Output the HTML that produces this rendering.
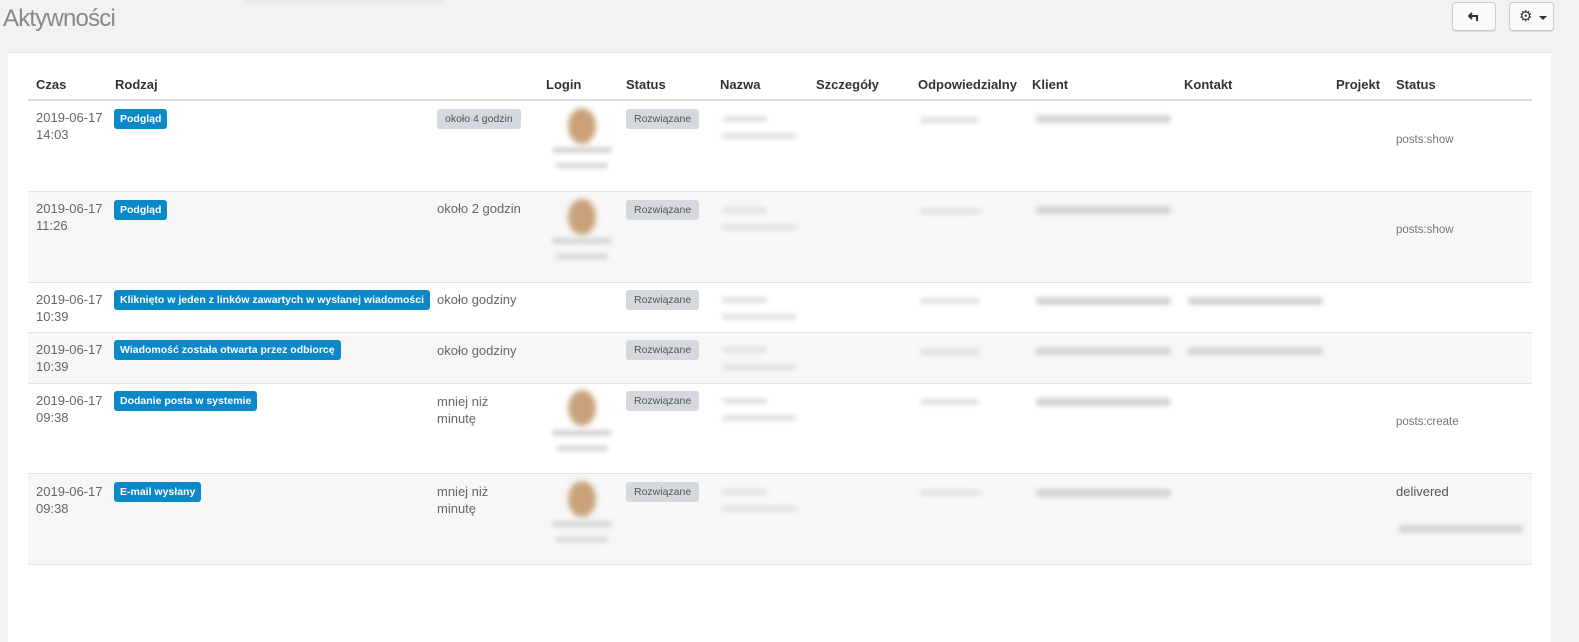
<!DOCTYPE html>
<html><head><meta charset="utf-8"><style>
*{margin:0;padding:0;box-sizing:border-box}
body{width:1579px;height:630px;background:#f2f2f2;font-family:"Liberation Sans",sans-serif;font-size:13px;color:#555;position:relative;overflow:hidden}
.a{position:absolute}
h1{position:absolute;left:3px;top:5px;font-weight:normal;font-size:24px;color:#888;letter-spacing:-0.8px}
.btn{position:absolute;top:2px;height:29px;background:#fafafa;border:1px solid #ccc;border-radius:4px;box-shadow:0 1px 1px rgba(0,0,0,.1)}
.panel{position:absolute;left:8px;top:52px;width:1543px;height:590px;background:#fff;border-top:1px solid #e3e6e8}
.hd{position:absolute;top:77px;font-weight:bold;color:#333;font-size:13px}
.hl{position:absolute;left:28px;width:1504px;top:99px;height:2px;background:#ddd}
.row{position:absolute;left:28px;width:1504px;border-bottom:1px solid #e4e4e4}
.st{background:#f7f7f7}
.t{position:absolute;line-height:17px;color:#666}
.bb{position:absolute;height:20px;background:#0a88c8;color:#fff;font-weight:bold;font-size:10.5px;line-height:20px;padding:0 6px;border-radius:3px}
.gb{position:absolute;height:20px;background:#d3d9de;color:#555;font-size:10.5px;line-height:20px;padding:0 8px;border-radius:3px}
.bl{position:absolute;background:#d4d4d4;filter:blur(2.5px);border-radius:3px}
.av{position:absolute;width:28px;height:36px;border-radius:50%;background:#c9a27a;filter:blur(3px)}
.sm{position:absolute;color:#777;font-size:11.5px}
</style></head><body>
<h1>Aktywności</h1>
<div class="a" style="left:245px;top:0;width:200px;height:4px;background:#eaedef"></div>
<div class="btn" style="left:1452px;width:44px"><svg class="a" style="left:15px;top:9px" width="12" height="10" viewBox="0 0 12 10"><path d="M4 1L1 4L4 7M1 4H9V9" fill="none" stroke="#333" stroke-width="2"/></svg></div>
<div class="btn" style="left:1509px;width:45px"><span class="a" style="left:9px;top:4px;font-size:15px;color:#333">⚙</span><span class="a" style="left:29px;top:13px;border-left:4px solid transparent;border-right:4px solid transparent;border-top:4px solid #333"></span></div>
<div class="panel"></div>
<div class="hd" style="left:36px">Czas</div>
<div class="hd" style="left:115px">Rodzaj</div>
<div class="hd" style="left:546px">Login</div>
<div class="hd" style="left:626px">Status</div>
<div class="hd" style="left:720px">Nazwa</div>
<div class="hd" style="left:816px">Szczegóły</div>
<div class="hd" style="left:918px">Odpowiedzialny</div>
<div class="hd" style="left:1032px">Klient</div>
<div class="hd" style="left:1184px">Kontakt</div>
<div class="hd" style="left:1336px">Projekt</div>
<div class="hd" style="left:1396px">Status</div>
<div class="hl"></div>

<div class="row" style="top:101px;height:91px"></div>
<div class="row st" style="top:192px;height:91px"></div>
<div class="row" style="top:283px;height:50px"></div>
<div class="row st" style="top:333px;height:51px"></div>
<div class="row" style="top:384px;height:90px"></div>
<div class="row st" style="top:474px;height:91px"></div>

<div class="t" style="left:36px;top:109px">2019-06-17<br>14:03</div>
<div class="bb" style="left:114px;top:109px">Podgląd</div>
<div class="gb" style="left:437px;top:109px">około 4 godzin</div>
<div class="av" style="left:568px;top:108px"></div><div class="bl" style="left:552px;top:147px;width:60px;height:6px"></div><div class="bl" style="left:556px;top:163px;width:52px;height:5px"></div>
<div class="gb" style="left:626px;top:109px">Rozwiązane</div>
<div class="bl" style="left:722px;top:116px;width:45px;height:6px;background:#e2e2e2"></div><div class="bl" style="left:722px;top:133px;width:75px;height:6px;background:#e2e2e2"></div>
<div class="bl" style="left:920px;top:117px;width:60px;height:6px;background:#e2e2e2"></div>
<div class="bl" style="left:1036px;top:115px;width:135px;height:8px"></div>
<div class="sm" style="left:1396px;top:134px">posts:show</div>

<div class="t" style="left:36px;top:200px">2019-06-17<br>11:26</div>
<div class="bb" style="left:114px;top:200px">Podgląd</div>
<div class="t" style="left:437px;top:200px">około 2 godzin</div>
<div class="av" style="left:568px;top:199px"></div><div class="bl" style="left:552px;top:238px;width:60px;height:6px"></div><div class="bl" style="left:556px;top:254px;width:52px;height:5px"></div>
<div class="gb" style="left:626px;top:200px">Rozwiązane</div>
<div class="bl" style="left:722px;top:207px;width:45px;height:6px;background:#e2e2e2"></div><div class="bl" style="left:722px;top:224px;width:75px;height:6px;background:#e2e2e2"></div>
<div class="bl" style="left:920px;top:208px;width:60px;height:6px;background:#e2e2e2"></div>
<div class="bl" style="left:1036px;top:206px;width:135px;height:8px"></div>
<div class="sm" style="left:1396px;top:224px">posts:show</div>

<div class="t" style="left:36px;top:291px">2019-06-17<br>10:39</div>
<div class="bb" style="left:114px;top:290px">Kliknięto w jeden z linków zawartych w wysłanej wiadomości</div>
<div class="t" style="left:437px;top:291px">około godziny</div>
<div class="gb" style="left:626px;top:290px">Rozwiązane</div>
<div class="bl" style="left:722px;top:297px;width:45px;height:6px;background:#e2e2e2"></div><div class="bl" style="left:722px;top:314px;width:75px;height:6px;background:#e2e2e2"></div>
<div class="bl" style="left:920px;top:298px;width:60px;height:6px;background:#e2e2e2"></div>
<div class="bl" style="left:1036px;top:297px;width:135px;height:8px"></div>
<div class="bl" style="left:1188px;top:297px;width:135px;height:8px"></div>

<div class="t" style="left:36px;top:341px">2019-06-17<br>10:39</div>
<div class="bb" style="left:114px;top:340px">Wiadomość została otwarta przez odbiorcę</div>
<div class="t" style="left:437px;top:342px">około godziny</div>
<div class="gb" style="left:626px;top:340px">Rozwiązane</div>
<div class="bl" style="left:722px;top:347px;width:45px;height:6px;background:#e2e2e2"></div><div class="bl" style="left:722px;top:364px;width:75px;height:6px;background:#e2e2e2"></div>
<div class="bl" style="left:920px;top:349px;width:60px;height:6px;background:#e2e2e2"></div>
<div class="bl" style="left:1036px;top:347px;width:135px;height:8px"></div>
<div class="bl" style="left:1188px;top:347px;width:135px;height:8px"></div>

<div class="t" style="left:36px;top:392px">2019-06-17<br>09:38</div>
<div class="bb" style="left:114px;top:391px">Dodanie posta w systemie</div>
<div class="t" style="left:437px;top:393px">mniej niż<br>minutę</div>
<div class="av" style="left:568px;top:390px"></div><div class="bl" style="left:552px;top:430px;width:60px;height:6px"></div><div class="bl" style="left:556px;top:446px;width:52px;height:5px"></div>
<div class="gb" style="left:626px;top:391px">Rozwiązane</div>
<div class="bl" style="left:722px;top:398px;width:45px;height:6px;background:#e2e2e2"></div><div class="bl" style="left:722px;top:415px;width:75px;height:6px;background:#e2e2e2"></div>
<div class="bl" style="left:920px;top:399px;width:60px;height:6px;background:#e2e2e2"></div>
<div class="bl" style="left:1036px;top:398px;width:135px;height:8px"></div>
<div class="sm" style="left:1396px;top:416px">posts:create</div>

<div class="t" style="left:36px;top:483px">2019-06-17<br>09:38</div>
<div class="bb" style="left:114px;top:482px">E-mail wysłany</div>
<div class="t" style="left:437px;top:483px">mniej niż<br>minutę</div>
<div class="av" style="left:568px;top:481px"></div><div class="bl" style="left:552px;top:521px;width:60px;height:6px"></div><div class="bl" style="left:556px;top:537px;width:52px;height:5px"></div>
<div class="gb" style="left:626px;top:482px">Rozwiązane</div>
<div class="bl" style="left:722px;top:489px;width:45px;height:6px;background:#e2e2e2"></div><div class="bl" style="left:722px;top:506px;width:75px;height:6px;background:#e2e2e2"></div>
<div class="bl" style="left:920px;top:490px;width:60px;height:6px;background:#e2e2e2"></div>
<div class="bl" style="left:1036px;top:489px;width:135px;height:8px"></div>
<div class="t" style="left:1396px;top:483px;color:#555">delivered</div>
<div class="bl" style="left:1398px;top:525px;width:125px;height:8px"></div>
</body></html>
